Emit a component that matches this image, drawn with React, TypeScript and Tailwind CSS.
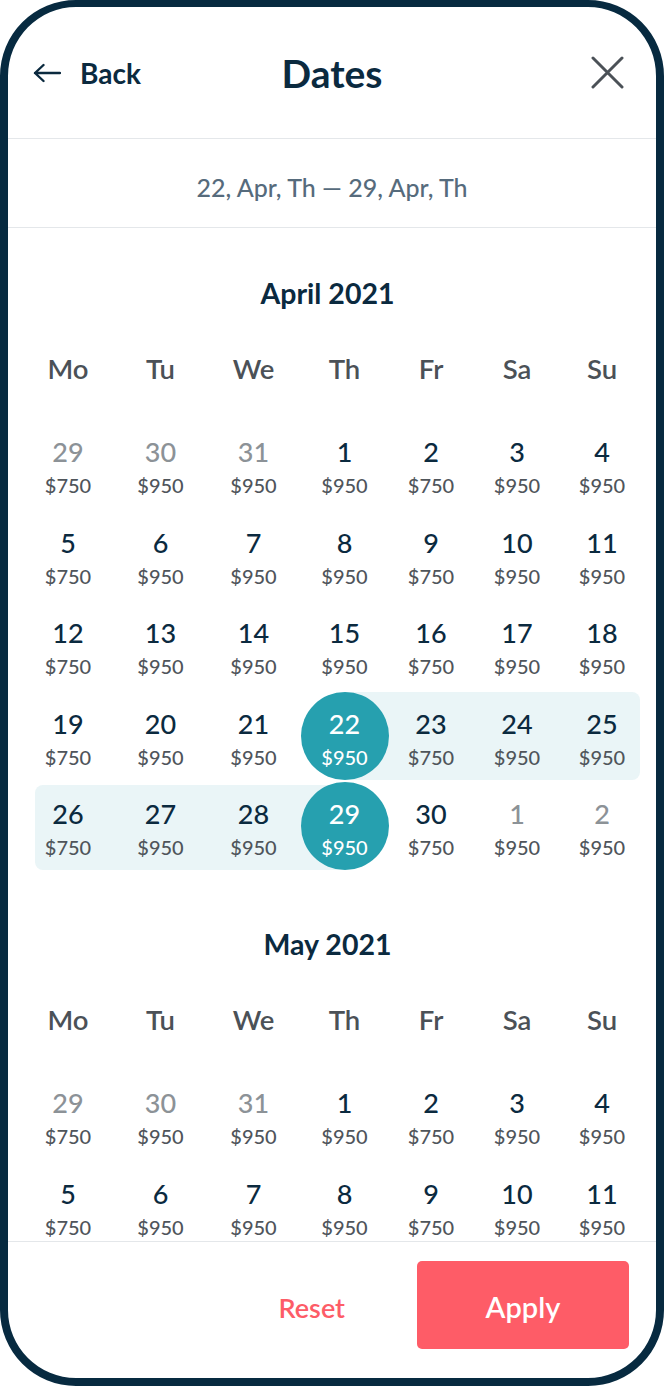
import React from "react";

type Day = { n: number; p: number; muted?: boolean; sel?: boolean };

const colStart = [
  "col-start-1",
  "col-start-2",
  "col-start-3",
  "col-start-4",
  "col-start-5",
  "col-start-6",
  "col-start-7",
];

const prices = [750, 950, 950, 950, 750, 950, 950];
const weekdays = ["Mo", "Tu", "We", "Th", "Fr", "Sa", "Su"];

function mk(nums: number[], mutedIdx: number[] = [], selIdx: number[] = []): Day[] {
  return nums.map((n, i) => ({
    n,
    p: prices[i],
    muted: mutedIdx.includes(i),
    sel: selIdx.includes(i),
  }));
}

const april: { days: Day[]; band?: "right" | "left" }[] = [
  { days: mk([29, 30, 31, 1, 2, 3, 4], [0, 1, 2]) },
  { days: mk([5, 6, 7, 8, 9, 10, 11]) },
  { days: mk([12, 13, 14, 15, 16, 17, 18]) },
  { days: mk([19, 20, 21, 22, 23, 24, 25], [], [3]), band: "right" },
  { days: mk([26, 27, 28, 29, 30, 1, 2], [5, 6], [3]), band: "left" },
];

const may: { days: Day[]; band?: "right" | "left" }[] = [
  { days: mk([29, 30, 31, 1, 2, 3, 4], [0, 1, 2]) },
  { days: mk([5, 6, 7, 8, 9, 10, 11]) },
];

const GRID = "grid grid-cols-[92px_93px_93px_89px_84px_88px_82px]";

function Row({ days, band }: { days: Day[]; band?: "right" | "left" }) {
  return (
    <div className={`${GRID} h-[88px]`}>
      {band === "right" && (
        <div className="col-start-4 col-end-8 row-start-1 ml-[45px] mr-[3px] bg-[#eaf5f7] rounded-r-[8px]" />
      )}
      {band === "left" && (
        <div className="col-start-1 col-end-5 row-start-1 ml-[13px] mr-[44px] bg-[#eaf5f7] rounded-l-[8px] mt-[3px]" />
      )}
      {days.map((d, i) => (
        <div key={i} className={`${colStart[i]} row-start-1 flex justify-center`}>
          {d.sel ? (
            <div className="w-[88px] h-[88px] rounded-full bg-[#26a0af] flex flex-col items-center">
              <span className="mt-[16px] text-[27px] leading-[32px] font-medium text-white">{d.n}</span>
              <span className="mt-[5px] text-[20px] leading-[24px] font-medium text-white">${d.p}</span>
            </div>
          ) : (
            <div className="flex flex-col items-center">
              <span
                className={`mt-[16px] text-[27px] leading-[32px] font-medium ${
                  d.muted ? "text-[#8c9297]" : "text-[#0b2a3f]"
                }`}
              >
                {d.n}
              </span>
              <span className="mt-[5px] text-[20px] leading-[24px] font-medium text-[#4f555b]">${d.p}</span>
            </div>
          )}
        </div>
      ))}
    </div>
  );
}

function Month({ title, rows }: { title: string; rows: { days: Day[]; band?: "right" | "left" }[] }) {
  return (
    <div className="flex flex-col w-[621px]">
      <div className="h-[32px] pr-[10px] flex items-center justify-center text-[28.5px] leading-[32px] font-bold text-[#0b2a3f]">
        {title}
      </div>
      <div className={`${GRID} mt-[40px] h-[40px] items-center`}>
        {weekdays.map((w) => (
          <div key={w} className="text-center text-[27.5px] leading-[40px] font-semibold text-[#4b5157]">
            {w}
          </div>
        ))}
      </div>
      <div className="mt-[31px] flex flex-col gap-y-[2.5px]">
        {rows.map((r, i) => (
          <Row key={i} days={r.days} band={r.band} />
        ))}
      </div>
    </div>
  );
}

export default function App() {
  return (
    <div className="w-[664px] h-[1386px] bg-white font-['Lato','Noto_Sans',sans-serif]">
      <div className="w-[664px] h-[1386px] border-[8px] border-t-[7px] border-[#072a40] rounded-[76px] overflow-hidden flex flex-col bg-white">
        {/* Header */}
        <div className="h-[132px] shrink-0 grid grid-cols-[1fr_auto_1fr] items-center border-b border-[#e4e7ea]">
          <div className="flex items-center pl-[25px] gap-[19px]">
            <svg width="28" height="20" viewBox="0 0 28 20" fill="none">
              <path
                d="M27 10H2M10.5 2L2 10l8.5 8"
                stroke="#0b2a3f"
                strokeWidth="2.4"
                strokeLinecap="round"
                strokeLinejoin="round"
              />
            </svg>
            <span className="text-[28px] leading-[34px] font-bold text-[#0b2a3f]">Back</span>
          </div>
          <div className="text-[39px] leading-[44px] font-bold text-[#0b2a3f]">Dates</div>
          <div className="flex justify-end pr-[32px]">
            <svg width="33" height="33" viewBox="0 0 33 33" fill="none">
              <path d="M2 2L31 31M31 2L2 31" stroke="#4b5157" strokeWidth="3" strokeLinecap="round" />
            </svg>
          </div>
        </div>

        {/* Date range */}
        <div className="h-[89px] shrink-0 flex items-center justify-center border-b border-[#e4e7ea] pt-[8px]">
          <span className="text-[25px] leading-[30px] font-medium text-[#566b7c]">
            22, Apr, Th — 29, Apr, Th
          </span>
        </div>

        {/* Scroll area */}
        <div className="h-[1013px] shrink-0 overflow-hidden">
          <div className="pt-[49px] pl-[14px] flex flex-col">
            <Month title="April 2021" rows={april} />
            <div className="h-[58px]" />
            <Month title="May 2021" rows={may} />
          </div>
        </div>

        {/* Footer */}
        <div className="flex-1 border-t border-[#e4e7ea] flex items-start justify-end pr-[27px] pt-[19px] gap-[72px]">
          <button className="h-[88px] pt-[6px] flex items-center text-[27px] font-semibold text-[#fd5c67]">Reset</button>
          <button className="w-[212px] h-[88px] rounded-[5px] bg-[#fe5c67] flex items-center justify-center pt-[3px] text-[29px] font-semibold text-white">
            Apply
          </button>
        </div>
      </div>
    </div>
  );
}
